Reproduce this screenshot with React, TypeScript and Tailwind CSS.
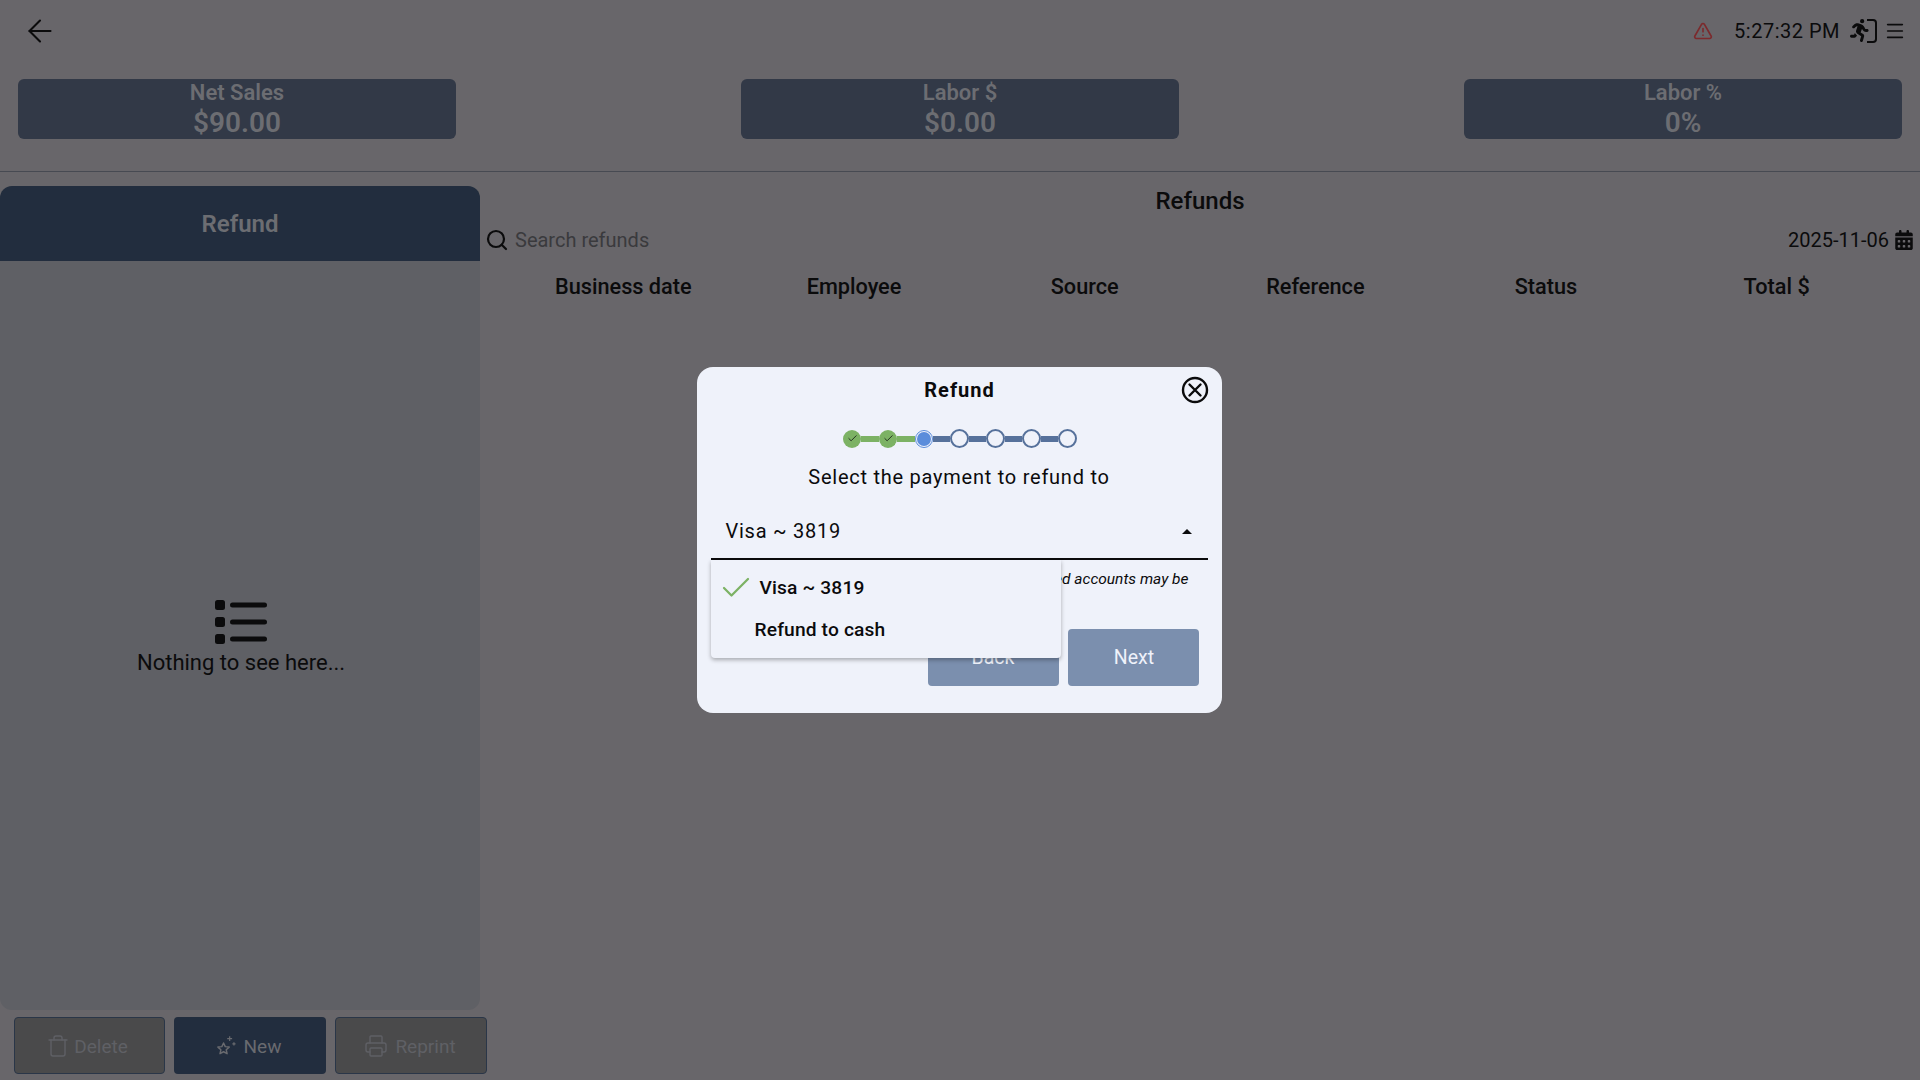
import { ArrowLeft, Check, Menu, Printer, Search, Trash, TriangleAlert } from "lucide-react";
import { FaCalendarDays, FaPersonRunning } from "react-icons/fa6";

const stats = [
  { label: "Net Sales", value: "$90.00" },
  { label: "Labor $", value: "$0.00" },
  { label: "Labor %", value: "0%" },
];

const columns = ["Business date", "Employee", "Source", "Reference", "Status", "Total $"];

function StatCard({ label, value }: { label: string; value: string }) {
  return (
    <div className="w-[438px] h-[60px] pt-px rounded-md bg-[#323947] flex flex-col items-center text-[#6c6d72] font-semibold">
      <span className="text-[22px] leading-[26px]">{label}</span>
      <span className="text-[28px] leading-[34px]">{value}</span>
    </div>
  );
}

function StarsIcon() {
  return (
    <svg width="22" height="22" viewBox="0 0 18 18" fill="none" stroke="currentColor" strokeWidth="1.2" strokeLinejoin="round">
      <path d="M7 6.5l1.4 3 3.2.4-2.4 2.2.7 3.2L7 13.7l-2.9 1.6.7-3.2-2.4-2.2 3.2-.4z" />
      <path d="M12 1v4M10 3h4M15.5 6v2.5M14.2 7.2h2.6" strokeWidth="1" />
    </svg>
  );
}

function ListIcon() {
  return (
    <svg width="52" height="44" viewBox="0 0 52 44" fill="#0b0b0c">
      <rect x="0" y="0" width="10" height="10" rx="2.5" />
      <rect x="0" y="17" width="10" height="10" rx="2.5" />
      <rect x="0" y="34" width="10" height="10" rx="2.5" />
      <rect x="15" y="2.5" width="37" height="5" rx="2.5" />
      <rect x="15" y="19.5" width="37" height="5" rx="2.5" />
      <rect x="15" y="36.5" width="37" height="5" rx="2.5" />
    </svg>
  );
}

function CloseIcon() {
  return (
    <svg width="28" height="28" viewBox="0 0 28 28" fill="none" stroke="#0b0b0c" strokeWidth="2.4" strokeLinecap="round">
      <circle cx="14" cy="14" r="12" />
      <path d="M8.5 8.5l11 11M19.5 8.5l-11 11" />
    </svg>
  );
}

function ExitIcon() {
  return (
    <div className="relative w-[27px] h-[24px] text-[#0b0b0c]">
      <FaPersonRunning className="absolute left-0 top-0 w-[20px] h-[23px]" />
      <div className="absolute right-0 top-0 w-[10px] h-[24px] border-2 border-l-0 border-[#0b0b0c] rounded-r-sm" />
    </div>
  );
}

function ActionButton({ children, className }: { children: React.ReactNode; className: string }) {
  return (
    <div className={`h-[57px] shrink-0 flex items-center justify-center rounded-sm text-[19px] leading-[22px] ${className}`}>
      {children}
    </div>
  );
}

function Stepper() {
  return (
    <div className="flex items-center justify-center ml-[2px]">
      <div className="w-[18px] h-[18px] rounded-full bg-[#7cb264] flex items-center justify-center">
        <Check className="w-[11px] h-[11px] text-[#1e2a1a]" strokeWidth={2} />
      </div>
      <div className="w-[18px] h-[6px] bg-[#7cb264]" />
      <div className="w-[18px] h-[18px] rounded-full bg-[#7cb264] flex items-center justify-center">
        <Check className="w-[11px] h-[11px] text-[#1e2a1a]" strokeWidth={2} />
      </div>
      <div className="w-[18px] h-[6px] bg-[#7cb264]" />
      <div className="w-[18px] h-[18px] rounded-full border border-[#5b8ddb] bg-[#eff2fa] flex items-center justify-center">
        <div className="w-3.5 h-3.5 rounded-full bg-[#5b8ddb]" />
      </div>
      {[0, 1, 2, 3].map((i) => (
        <div key={i} className="flex items-center">
          <div className="w-[17px] h-[6px] bg-[#56719b]" />
          <div className="w-[19px] h-[19px] rounded-full border-2 border-[#56719b] bg-[#eff2fa]" />
        </div>
      ))}
    </div>
  );
}

export default function App() {
  return (
    <div className="w-[1920px] h-[1080px] overflow-hidden bg-[#68666a] flex flex-col font-['Roboto',sans-serif] text-[#0b0b0c]">
      {/* top bar */}
      <div className="h-[62px] flex items-center pl-[22px] pr-[14px]">
        <ArrowLeft className="w-9 h-9" strokeWidth={1.4} />
        <div className="ml-auto flex items-center">
          <TriangleAlert className="w-[20px] h-[20px] text-[#7c2a2d]" strokeWidth={2} />
          <span className="ml-[21px] text-[20px] tracking-wide">5:27:32 PM</span>
          <div className="ml-[10px]">
            <ExitIcon />
          </div>
          <Menu className="ml-[7px] w-[22px] h-[22px]" strokeWidth={1.8} />
        </div>
      </div>

      {/* stats */}
      <div className="h-[110px] pt-[17px] px-[18px] flex justify-between border-b border-[#474a52]">
        {stats.map((s) => (
          <StatCard key={s.label} label={s.label} value={s.value} />
        ))}
      </div>

      <div className="flex-1 flex pt-[14px]">
        {/* left side */}
        <div className="w-[480px] flex flex-col">
          <div className="w-[480px] h-[824px] rounded-xl bg-[#5f6065] flex flex-col overflow-hidden">
            <div className="h-[75px] bg-[#222d3e] flex items-center justify-center text-[24px] font-semibold text-[#6c6d72]">
              Refund
            </div>
            <div className="flex-1 flex flex-col items-center justify-center pt-[7px] pl-[2px]">
              <ListIcon />
              <span className="text-[22px] leading-[32px] mt-[3px]">Nothing to see here...</span>
            </div>
          </div>
          <div className="ml-[14px] mt-[7px] flex gap-[9px]">
            <ActionButton className="w-[151px] gap-[4px] pr-[5px] bg-[#4a4a4b] border border-[#2a3648] text-[#5f6065]">
              <Trash className="w-[24px] h-[24px]" strokeWidth={1.4} />
              <span className="pt-[2px]">Delete</span>
            </ActionButton>
            <ActionButton className="w-[152px] gap-[7px] pr-[4px] bg-[#222d3e] text-[#696a6f]">
              <StarsIcon />
              <span className="pt-[2px]">New</span>
            </ActionButton>
            <ActionButton className="w-[152px] gap-[7px] pr-[2px] bg-[#4a4a4b] border border-[#2a3648] text-[#5f6065]">
              <Printer className="w-[24px] h-[24px]" strokeWidth={1.4} />
              <span className="pt-[2px]">Reprint</span>
            </ActionButton>
          </div>
        </div>

        {/* refunds list */}
        <div className="flex-1 flex flex-col">
          <div className="text-center text-[24px] font-medium leading-[30px]">Refunds</div>
          <div className="h-[36px] mt-[6px] flex items-center pl-[5px] pr-[7px]">
            <Search className="w-6 h-6" strokeWidth={2.2} />
            <span className="ml-[6px] text-[20px] text-[#3a3a3d]">Search refunds</span>
            <span className="ml-auto text-[20px]">2025-11-06</span>
            <FaCalendarDays className="ml-[6px] w-[18px] h-[20px]" />
          </div>
          <div className="grid grid-cols-6 w-[1384px] ml-[28px] mt-[13px] text-[21.7px] font-medium text-center">
            {columns.map((c) => (
              <span key={c}>{c}</span>
            ))}
          </div>
        </div>
      </div>

      {/* refund dialog */}
      <div className="fixed inset-0 flex items-center justify-center pr-[2px]">
        <div className="w-[525px] h-[346px] rounded-2xl bg-[#eff2fa] flex flex-col px-[14px] relative">
          <div className="text-center text-[20px] font-bold tracking-wider leading-[24px] mt-[11px] pl-px">Refund</div>
          <div className="absolute right-[13px] top-[9px]">
            <CloseIcon />
          </div>
          <div className="mt-[27px]">
            <Stepper />
          </div>
          <div className="text-center text-[20px] tracking-[0.75px] leading-[24px] mt-[17px]">Select the payment to refund to</div>
          <div className="mt-[14px] h-[57px] border-b-2 border-[#0b0b0c] flex items-center pl-[15px] pr-[14px] text-[20px] tracking-[0.75px]">
            Visa ~ 3819
            <div className="ml-auto mr-[2px] mt-[2px] w-0 h-0 border-x-[5px] border-x-transparent border-b-[5px] border-b-[#0b0b0c]" />
          </div>
          <div className="text-right pr-[19px] mt-[9px] text-[15.5px] italic leading-[20px]">
            Linked accounts may be
          </div>
          <div className="mt-[40px] mr-[9px] flex justify-end gap-[9px]">
            <div className="w-[131px] h-[57px] rounded-sm bg-[#7b8fae] flex items-center justify-center text-[#eff2fa] text-[19.5px]">Back</div>
            <div className="w-[131px] h-[57px] pl-[2px] rounded-sm bg-[#7b8fae] flex items-center justify-center text-[#eff2fa] text-[19.5px]">Next</div>
          </div>

          {/* open select menu */}
          <div className="absolute left-[14px] top-[193px] w-[350px] h-[98px] bg-[#eff2fa] rounded-b-sm shadow-[0_2px_4px_rgba(0,0,0,0.3)] flex flex-col text-[19.2px] font-medium tracking-[0.15px]">
            <div className="h-[56px] flex items-center pl-[7px]">
              <Check className="w-9 h-9 text-[#7cb264]" strokeWidth={1.5} />
              <span className="ml-[6px]">Visa ~ 3819</span>
            </div>
            <div className="h-[28px] flex items-center pl-[44px]">Refund to cash</div>
          </div>
        </div>
      </div>
    </div>
  );
}
